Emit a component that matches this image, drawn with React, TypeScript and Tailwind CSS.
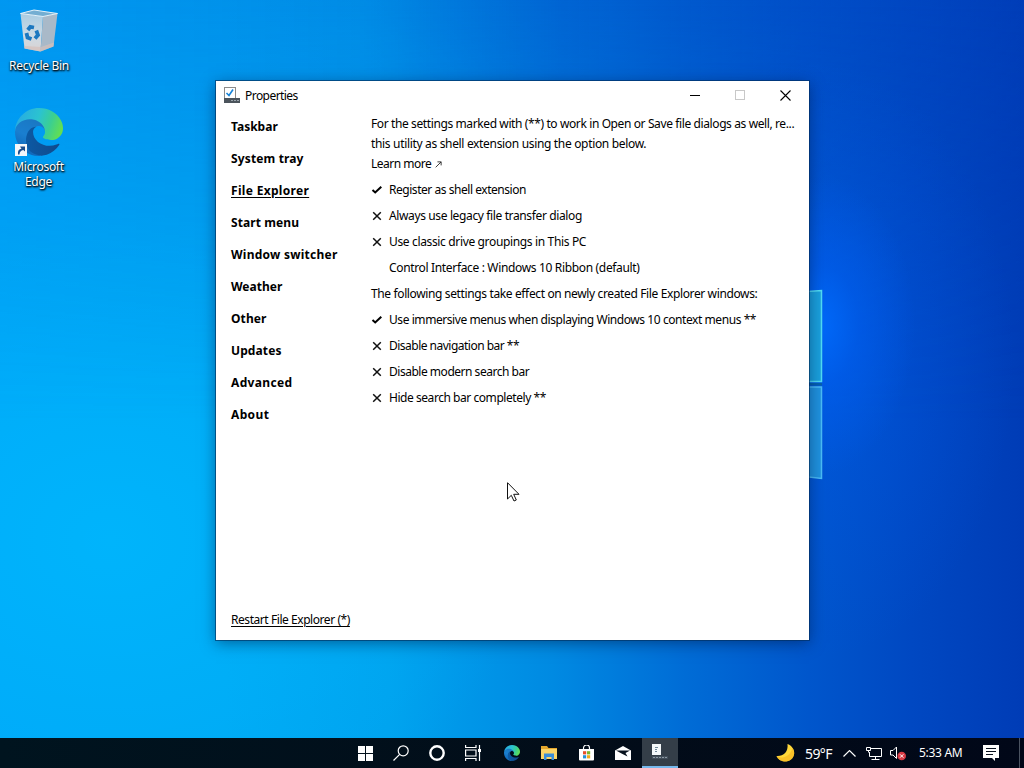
import React from 'react';

interface Setting {
  mark: 'on' | 'off' | 'none' | 'heading';
  label: string;
  tracking: string;
}

const categories = [
  { label: 'Taskbar', tracking: 'tracking-normal' },
  { label: 'System tray', tracking: 'tracking-[0.14px]' },
  { label: 'File Explorer', tracking: 'tracking-[0.32px]' },
  { label: 'Start menu', tracking: 'tracking-[0.1px]' },
  { label: 'Window switcher', tracking: 'tracking-[0.25px]' },
  { label: 'Weather', tracking: 'tracking-normal' },
  { label: 'Other', tracking: 'tracking-[0.1px]' },
  { label: 'Updates', tracking: 'tracking-[0.1px]' },
  { label: 'Advanced', tracking: 'tracking-[0.36px]' },
  { label: 'About', tracking: 'tracking-[0.36px]' },
];

const settings: Setting[] = [
  { mark: 'on', label: 'Register as shell extension', tracking: 'tracking-[-0.46px]' },
  { mark: 'off', label: 'Always use legacy file transfer dialog', tracking: 'tracking-[-0.37px]' },
  { mark: 'off', label: 'Use classic drive groupings in This PC', tracking: 'tracking-[-0.35px]' },
  { mark: 'none', label: 'Control Interface : Windows 10 Ribbon (default)', tracking: 'tracking-[-0.34px]' },
  { mark: 'heading', label: 'The following settings take effect on newly created File Explorer windows:', tracking: 'tracking-[-0.37px]' },
  { mark: 'on', label: 'Use immersive menus when displaying Windows 10 context menus **', tracking: 'tracking-[-0.43px]' },
  { mark: 'off', label: 'Disable navigation bar **', tracking: 'tracking-[-0.51px]' },
  { mark: 'off', label: 'Disable modern search bar', tracking: 'tracking-[-0.48px]' },
  { mark: 'off', label: 'Hide search bar completely **', tracking: 'tracking-[-0.45px]' },
];

const EdgeIcon: React.FC<{ className: string; id: string }> = ({ className, id }) => (
  <svg className={className} viewBox="0 0 256 256">
    <defs>
      <linearGradient id={`${id}-a`} x1="60" y1="177" x2="240" y2="177" gradientUnits="userSpaceOnUse">
        <stop offset="0" stopColor="#0c59a4" />
        <stop offset="1" stopColor="#114a8b" />
      </linearGradient>
      <linearGradient id={`${id}-b`} x1="130" y1="80" x2="50" y2="240" gradientUnits="userSpaceOnUse">
        <stop offset="0" stopColor="#1a78c4" />
        <stop offset="0.5" stopColor="#1a7fd0" />
        <stop offset="1" stopColor="#0f66b8" />
      </linearGradient>
      <linearGradient id={`${id}-c`} x1="20" y1="60" x2="245" y2="140" gradientUnits="userSpaceOnUse">
        <stop offset="0" stopColor="#28aee0" />
        <stop offset="0.4" stopColor="#2bc3d0" />
        <stop offset="0.7" stopColor="#3bcf91" />
        <stop offset="1" stopColor="#66e04c" />
      </linearGradient>
    </defs>
    <path fill={`url(#${id}-b)`} d="M105.7 241.4c-8.9-5.5-16.6-12.8-22.7-21.3-26.3-36-18.4-86.5 17.6-112.8 3.8-2.7 7.7-5.2 11.9-7.2 3.1-1.5 8.4-4.1 15.5-4 10.1.1 19.6 4.9 25.7 13 4 5.4 6.3 11.9 6.4 18.7 0-.2 24.5-79.6-80-79.6-43.9 0-80 41.7-80 78.2-.2 19.3 4 38.5 12.1 56 27.6 58.8 94.8 87.6 156.4 67.1-21.1 6.6-44.1 3.7-62.9-8.1z" />
    <path fill={`url(#${id}-a)`} d="M231.1 190.5c-3.4 1.8-6.9 3.4-10.5 4.7-11.5 4.3-23.6 6.5-35.9 6.5-47.3 0-88.5-32.5-88.5-74.3.1-11.4 6.4-21.9 16.4-27.3-42.8 1.8-53.8 46.4-53.8 72.5 0 73.9 68.1 81.4 82.8 81.4 7.9 0 19.8-2.3 27-4.6l1.3-.4c27.6-9.5 51-28.1 66.6-52.8 1.2-1.9.6-4.3-1.2-5.5-1.3-.8-2.9-.9-4.2-.2z" />
    <path fill={`url(#${id}-c)`} d="M152.3 148.9c-.8 1-3.3 2.5-3.3 5.7 0 2.6 1.7 5.1 4.7 7.2 14.4 10 41.5 8.7 41.6 8.7 10.7 0 21.1-2.9 30.3-8.3 18.8-11 30.4-31.1 30.4-52.9.3-22.4-8-37.3-11.3-43.9C223.5 23.9 177.7 0 128 0 58 0 1 56.2 0 126.2c.5-36.5 36.8-66 80-66 3.5 0 23.5.3 42 10.1 16.3 8.6 24.9 18.9 30.8 29.2 6.2 10.7 7.3 24.1 7.3 29.5s-2.7 13.3-7.8 19.9z" />
  </svg>
);

const RecycleBinIcon = () => (
  <svg className="h-[44px] w-[40px]" viewBox="0 0 40 44">
    <defs>
      <linearGradient id="bin" x1="0" y1="0" x2="0" y2="1">
        <stop offset="0" stopColor="#a9cce2" />
        <stop offset="0.6" stopColor="#cfdbe4" />
        <stop offset="1" stopColor="#d9d2d2" />
      </linearGradient>
    </defs>
    <path d="M1.500 4.500 24 7.500 21.500 42.500 5.500 39.500z" fill="url(#bin)" />
    <path d="M24 7.500 38.500 4.500 34.500 37.500 21.500 42.500z" fill="#a9b9c8" />
    <path d="M22 38 35 33.500 34.500 37.500 21.500 42.500 5.500 39.500 5.300 37z" fill="#d5c0ba" opacity="0.7" />
    <path d="M1.500 4.500 15 1 38.500 4.500 24 7.500z" fill="#74aed2" stroke="#e6f1f8" strokeWidth="1" />
    <g fill="none" stroke="#1c78c0" strokeWidth="3.800">
      <path d="M8.800 21 11.300 17.800 15 18.500" />
      <path d="M17.300 21.500 19 26 16 29.500" />
      <path d="M12.500 30 8.500 28.500 7.500 24" />
    </g>
  </svg>
);

const CheckMark = () => (
  <svg className="h-[12px] w-[12px]" viewBox="0 0 12 12" fill="none" stroke="#000" strokeWidth="2">
    <path d="M1.500 6 4.200 8.500 10.300 2.700" />
  </svg>
);

const CrossMark = () => (
  <svg className="h-[12px] w-[12px]" viewBox="0 0 12 12" fill="none" stroke="#111" strokeWidth="1.500">
    <path d="M2.200 2.200 9.800 9.800M9.800 2.200 2.200 9.800" />
  </svg>
);

const PropertiesIcon = () => (
  <svg className="-mt-0.5 h-4 w-4" viewBox="0 0 16 16">
    <rect x="0.500" y="0.500" width="11" height="12" fill="#fff" stroke="#8b8b8b" />
    <path d="M2.500 6 5 8.500 9 2.500" fill="none" stroke="#1683d8" strokeWidth="1.600" />
    <path d="M0 11h16v5H0z" fill="#4b545c" />
    <path d="M7 13.500h2M10 13.500h2M13 13.500h2" stroke="#9aa4ac" />
  </svg>
);

const DesktopWallpaper = () => (
  <>
    <div className="absolute inset-0 bg-[linear-gradient(90deg,#00a8f8_0%,#00a8f4_22%,#00a2ee_38%,#008ae2_54%,#006cd6_67%,#0056cc_79%,#0048c2_89%,#003cb6_100%)]" />
    <div className="absolute inset-0 bg-[radial-gradient(ellipse_420px_330px_at_110px_540px,rgba(0,188,255,0.6),rgba(0,188,255,0))]" />
    <div className="absolute inset-x-0 top-0 h-[420px] bg-[linear-gradient(90deg,rgba(0,100,220,0.25)_0%,rgba(0,96,212,0.35)_35%,rgba(0,74,200,0.58)_55%,rgba(0,70,196,0.5)_75%,rgba(0,64,188,0.3)_100%)] [mask-image:linear-gradient(180deg,#000_0%,transparent_100%)]" />
    <div className="absolute inset-0 bg-[radial-gradient(ellipse_200px_300px_at_815px_360px,rgba(0,88,232,0.5),rgba(0,80,220,0))]" />
    <div className="absolute inset-0 bg-[radial-gradient(ellipse_95px_150px_at_820px_325px,rgba(0,108,255,0.85),rgba(0,98,248,0.45)_40%,rgba(0,88,235,0))]" />
    <svg className="absolute top-[284px] left-[800px] h-[200px] w-[26px]" viewBox="0 0 26 200">
      <path d="M0 8 21.500 6.500V97.500H0z" fill="#1aa0dc" stroke="#51dcf4" strokeWidth="1.500" />
      <path d="M0 103H21.500V194.500L0 192z" fill="#1f92de" stroke="#4bbcf6" strokeWidth="1.500" />
      <path d="M0 100.300H22" stroke="#0661ad" strokeWidth="2.500" />
    </svg>
  </>
);

const PropertiesWindow = () => (
  <div className="absolute top-[81px] left-[216px] flex h-[559px] w-[593px] flex-col bg-white text-[12px] text-black shadow-[0_0_0_1px_rgba(0,45,90,0.6),0_3px_14px_rgba(0,20,60,0.5)]">
    <div className="flex h-[30px] shrink-0 items-center pl-2">
      <PropertiesIcon />
      <span className="ml-[5px] tracking-[-0.55px]">Properties</span>
      <div className="mb-0.5 ml-auto flex h-[28px]">
        <div className="flex w-[45px] items-center justify-center">
          <div className="h-px w-[10px] bg-black" />
        </div>
        <div className="flex w-[45px] items-center justify-center">
          <div className="h-[10px] w-[10px] border border-[#c8c8c8]" />
        </div>
        <div className="flex w-[47px] items-center justify-center">
          <svg className="h-[11px] w-[11px]" viewBox="0 0 11 11" stroke="#000" strokeWidth="1.100">
            <path d="M0.500 0.500 10.500 10.500M10.500 0.500 0.500 10.500" />
          </svg>
        </div>
      </div>
    </div>
    <div className="flex flex-1">
      <nav className="flex w-[155px] shrink-0 flex-col pl-[15px] font-bold">
        {categories.map(({ label, tracking }) => (
          <div key={label} className="h-8 leading-8 whitespace-nowrap">
            <span className={`${tracking} ${label === 'File Explorer' ? 'underline underline-offset-2' : ''}`}>{label}</span>
          </div>
        ))}
      </nav>
      <main className="flex-1 pt-[3px] whitespace-nowrap">
        <div className="h-5 leading-5 tracking-[-0.39px]">For the settings marked with (**) to work in Open or Save file dialogs as well, re...</div>
        <div className="h-5 leading-5 tracking-[-0.33px]">this utility as shell extension using the option below.</div>
        <div className="flex h-5 items-center leading-5 tracking-[-0.5px]">
          Learn more
          <svg className="ml-[4px] h-[7px] w-[7px]" viewBox="0 0 8 8" fill="none" stroke="#222">
            <path d="M0.800 7.200 7 1M2.800 1H7V5" />
          </svg>
        </div>
        <div className="pt-[3px]">
          {settings.map(({ mark, label, tracking }) => (
            <div key={label} className="flex h-[26px] items-center">
              {mark !== 'heading' && (
                <div className="w-[18px]">
                  {mark === 'on' && <CheckMark />}
                  {mark === 'off' && <CrossMark />}
                </div>
              )}
              <span className={tracking}>{label}</span>
            </div>
          ))}
        </div>
      </main>
    </div>
    <div className="h-[30px] shrink-0 pl-[15px] leading-5">
      <span className="tracking-[-0.44px] underline underline-offset-2">Restart File Explorer (*)</span>
    </div>
  </div>
);

const Taskbar = () => (
  <div className="absolute bottom-0 left-0 flex h-[30px] w-full bg-[linear-gradient(90deg,#00141f,#020d19_55%,#010718)] pl-[347px] text-white">
    <div className="flex w-9 items-center justify-center">
      <svg className="h-[15px] w-[15px]" viewBox="0 0 15 15" fill="#fff">
        <path d="M0 0h7v7H0zM8 0h7v7H8zM0 8h7v7H0zM8 8h7v7H8z" />
      </svg>
    </div>
    <div className="flex w-9 items-center justify-center">
      <svg className="h-4 w-4" viewBox="0 0 16 16" fill="none" stroke="#fff" strokeWidth="1.200">
        <circle cx="10.200" cy="5.800" r="5" />
        <path d="M6.700 9.400 0.500 15.500" />
      </svg>
    </div>
    <div className="flex w-9 items-center justify-center">
      <svg className="h-4 w-4" viewBox="0 0 16 16" fill="none" stroke="#fff" strokeWidth="2.400">
        <circle cx="8" cy="8" r="6.700" />
      </svg>
    </div>
    <div className="flex w-9 items-center justify-center">
      <svg className="h-4 w-[17px]" viewBox="0 0 17 16" fill="none" stroke="#fff" strokeWidth="1.200">
        <path d="M0.600 0V2.500H11V0M0.600 16V13.500H11V16M0.600 5H11V11H0.600zM14.500 0V16" />
        <path d="M13 4h3v3h-3z" fill="#fff" stroke="none" />
      </svg>
    </div>
    <div className="ml-[3px] flex gap-px">
      <div className="flex w-9 items-center justify-center">
        <EdgeIcon id="task-edge" className="h-4 w-4" />
      </div>
      <div className="flex w-9 items-center justify-center">
        <svg className="h-[14px] w-4" viewBox="0 0 16 14">
          <path d="M0 0h6l1.500 2H16v11H0z" fill="#e5a72c" />
          <path d="M0 3h16v10H0z" fill="#fbd468" />
          <path d="M3 14V7.500h10V14h-2.500v-3h-5v3z" fill="#3a8dd8" />
        </svg>
      </div>
      <div className="flex w-9 items-center justify-center">
        <svg className="h-4 w-[15px]" viewBox="0 0 15 16">
          <path d="M4.500 5V3a2.500 2.500 0 0 1 6 0v2" fill="none" stroke="#fff" strokeWidth="1.200" />
          <path d="M0 4h15v10.500q0 1-1 1H1q-1 0-1-1z" fill="#fff" />
          <path d="M4 6.200h3.200v3.200H4z" fill="#e8502a" />
          <path d="M8 6.200h3.200v3.200H8z" fill="#7bb52c" />
          <path d="M4 10.200h3.200v3.200H4z" fill="#2491d8" />
          <path d="M8 10.200h3.200v3.200H8z" fill="#f2ab1c" />
        </svg>
      </div>
      <div className="flex w-9 items-center justify-center">
        <svg className="h-[14px] w-4" viewBox="0 0 16 14">
          <path d="M0 4.500 8 0l8 4.500V14H0z" fill="#fff" />
          <path d="M1 4.500H15L10.500 7 12.500 10.500 7.500 8z" fill="#06101c" />
        </svg>
      </div>
      <div className="flex w-9 items-center justify-center border-b-2 border-[#76b9ed] bg-[#343e48]">
        <svg className="h-4 w-4" viewBox="0 0 16 16">
          <path d="M0 0h9v11H0z" fill="#f4f8fa" />
          <path d="M3 3.500h3M3 5.500h2M3 7.500h2" stroke="#71899a" />
          <path d="M0 12h16v3H0z" fill="#434f5b" />
          <path d="M1 13.500h2M4 13.500h2M7 13.500h2M10 13.500h2M13 13.500h2" stroke="#8b98a2" />
        </svg>
      </div>
    </div>
    <div className="ml-[98px] flex items-center">
      <svg className="h-[18px] w-[19px]" viewBox="0 0 19 18">
        <path d="M11.500 0C16.500 2 18.500 6 18.200 9.500 17.500 15.500 12.500 18 8 17.500 4.500 17 1.500 15 0.500 12 7 12.500 12.500 8.500 11.500 0z" fill="#ffd83a" />
        <path d="M0.500 12C7 15.500 14 12.500 16.500 4 19 8 18.500 12 16 14.800 11 19.500 3 18 0.500 12z" fill="#f5b31c" opacity="0.6" />
      </svg>
      <span className="ml-[10px] w-[38px] text-[14px] tracking-[-0.6px]">59°F</span>
      <svg className="h-[7px] w-[13px]" viewBox="0 0 13 7" fill="none" stroke="#fff" strokeWidth="1.200">
        <path d="M0.500 6.500 6.500 0.600 12.500 6.500" />
      </svg>
      <svg className="ml-[10px] h-[14px] w-4" viewBox="0 0 16 14" fill="none" stroke="#fff">
        <path d="M5 2.500h10.500v8H3.500V6M0.500 1.500h4v3h-4zM2.500 4.500v2M9.500 10.500v3M5.500 13.500h8" />
      </svg>
      <svg className="ml-[8px] h-4 w-4" viewBox="0 0 16 16">
        <path d="M0.500 5.500h2.500L6.500 2v11.500L3 10H0.500z" fill="none" stroke="#fff" />
        <circle cx="11.700" cy="11" r="4.300" fill="#d83b45" />
        <path d="m10 9.300 3.400 3.400m0-3.400L10 12.700" stroke="#fff" />
      </svg>
      <span className="ml-[13px] w-[64px] text-[12px] tracking-[-0.3px] whitespace-nowrap">5:33 AM</span>
      <svg className="h-4 w-4" viewBox="0 0 16 16">
        <path d="M0 0h16v13h-4v3l-3-3H0z" fill="#fff" />
        <path d="M3 3.500h10M3 6.500h10M3 9.500h7" stroke="#07101d" />
      </svg>
      <div className="ml-[20px] h-full w-px bg-[#4b5361]" />
    </div>
  </div>
);

const App: React.FC = () => (
  <div className="relative h-[768px] w-[1024px] overflow-hidden font-['Noto_Sans','Open_Sans',sans-serif]">
    <DesktopWallpaper />
    <div className="absolute top-[9px] left-0 flex w-[78px] flex-col items-center text-center text-[12px] leading-[15px] tracking-[-0.3px] text-white [text-shadow:0_1px_2px_#000,1px_1px_2px_#000]">
      <RecycleBinIcon />
      <span className="mt-[5px] whitespace-nowrap">Recycle Bin</span>
      <div className="relative mt-[35px]">
        <EdgeIcon id="desk-edge" className="h-12 w-12" />
        <svg className="absolute bottom-0 left-0 h-3 w-3" viewBox="0 0 12 12">
          <path d="M0 0h12v12H0z" fill="#f4f7fa" />
          <path d="M3 10.500C2.500 7 4 5 6.500 4.800L5 2.500h5v5L8.300 6C6 6.500 4.500 8 4.500 10.500z" fill="#1b4d8c" />
        </svg>
      </div>
      <span className="mt-[3px] mr-px">Microsoft</span>
      <span className="mr-px">Edge</span>
    </div>
    <PropertiesWindow />
    <Taskbar />
    <svg className="absolute top-[482px] left-[507px] h-5 w-[13px]" viewBox="0 0 13 20">
      <path d="M0.500 0.700V17L4.300 13.300 7 19 9.300 18 6.700 12.300H12z" fill="#fff" stroke="#111" />
    </svg>
  </div>
);

export default App;
